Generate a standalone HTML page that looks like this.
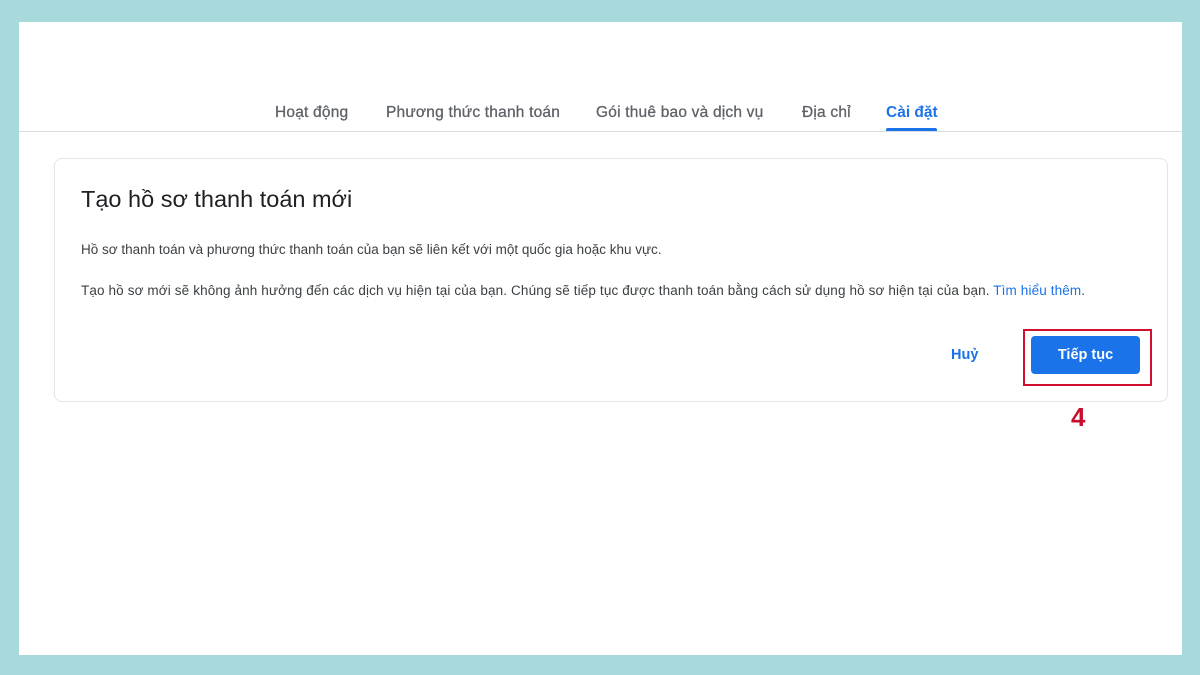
<!DOCTYPE html>
<html><head><meta charset="utf-8"><style>
body{margin:0;width:1200px;height:675px;background:#a8dadb;font-family:"Liberation Sans",sans-serif;position:relative;overflow:hidden}
.w{position:absolute;left:19px;top:22px;width:1163px;height:633px;background:#fff}
.tabs{position:absolute;top:104px;left:0;width:1200px;height:0}
.t{position:absolute;top:0;font-size:15.5px;color:#5f6368;white-space:nowrap;letter-spacing:0.2px;-webkit-text-stroke:0.3px #5f6368}
.line{position:absolute;left:19px;top:131px;width:1163px;height:1px;background:#dadce0}
.card{position:absolute;left:54px;top:158px;width:1112px;height:242px;border:1px solid #e3e5e8;border-radius:8px;background:#fff}
h1{position:absolute;left:81px;top:186px;margin:0;font-weight:normal;font-size:23.5px;color:#202124}
p{position:absolute;left:81px;margin:0;font-size:13.5px;color:#3c4043;white-space:nowrap}
a{color:#1a73e8;text-decoration:none}
.btn{position:absolute;left:1031px;top:336px;width:109px;height:38px;background:#1a73e8;border-radius:4px;color:#fff;font-size:14.5px;font-weight:bold;text-align:center;line-height:38px}
.box{position:absolute;left:1023px;top:329px;width:125px;height:53px;border:2px solid #d0102e}
</style></head><body>
<div class="w"></div>
<div class="tabs">
<span class="t" style="left:275px">Hoạt động</span>
<span class="t" style="left:386px">Phương thức thanh toán</span>
<span class="t" style="left:596px">Gói thuê bao và dịch vụ</span>
<span class="t" style="left:802px">Địa chỉ</span>
<span class="t" style="left:886px;color:#1a73e8;font-weight:bold;-webkit-text-stroke:0;letter-spacing:0">Cài đặt</span>
</div>
<div style="position:absolute;left:886px;top:128px;width:51px;height:3px;background:#1a73e8;border-radius:2px 2px 0 0"></div>
<div class="line"></div>
<div class="card"></div>
<h1>Tạo hồ sơ thanh toán mới</h1>
<p style="top:242px">Hồ sơ thanh toán và phương thức thanh toán của bạn sẽ liên kết với một quốc gia hoặc khu vực.</p>
<p style="top:283px;letter-spacing:0.13px">Tạo hồ sơ mới sẽ không ảnh hưởng đến các dịch vụ hiện tại của bạn. Chúng sẽ tiếp tục được thanh toán bằng cách sử dụng hồ sơ hiện tại của bạn. <a>Tìm hiểu thêm</a>.</p>
<div style="position:absolute;left:951px;top:347px;font-size:14.5px;font-weight:bold;color:#1a73e8">Huỷ</div>
<div class="btn">Tiếp tục</div>
<div class="box"></div>
<div style="position:absolute;left:1071px;top:402px;font-size:26px;font-weight:bold;color:#c8102e">4</div>
</body></html>
